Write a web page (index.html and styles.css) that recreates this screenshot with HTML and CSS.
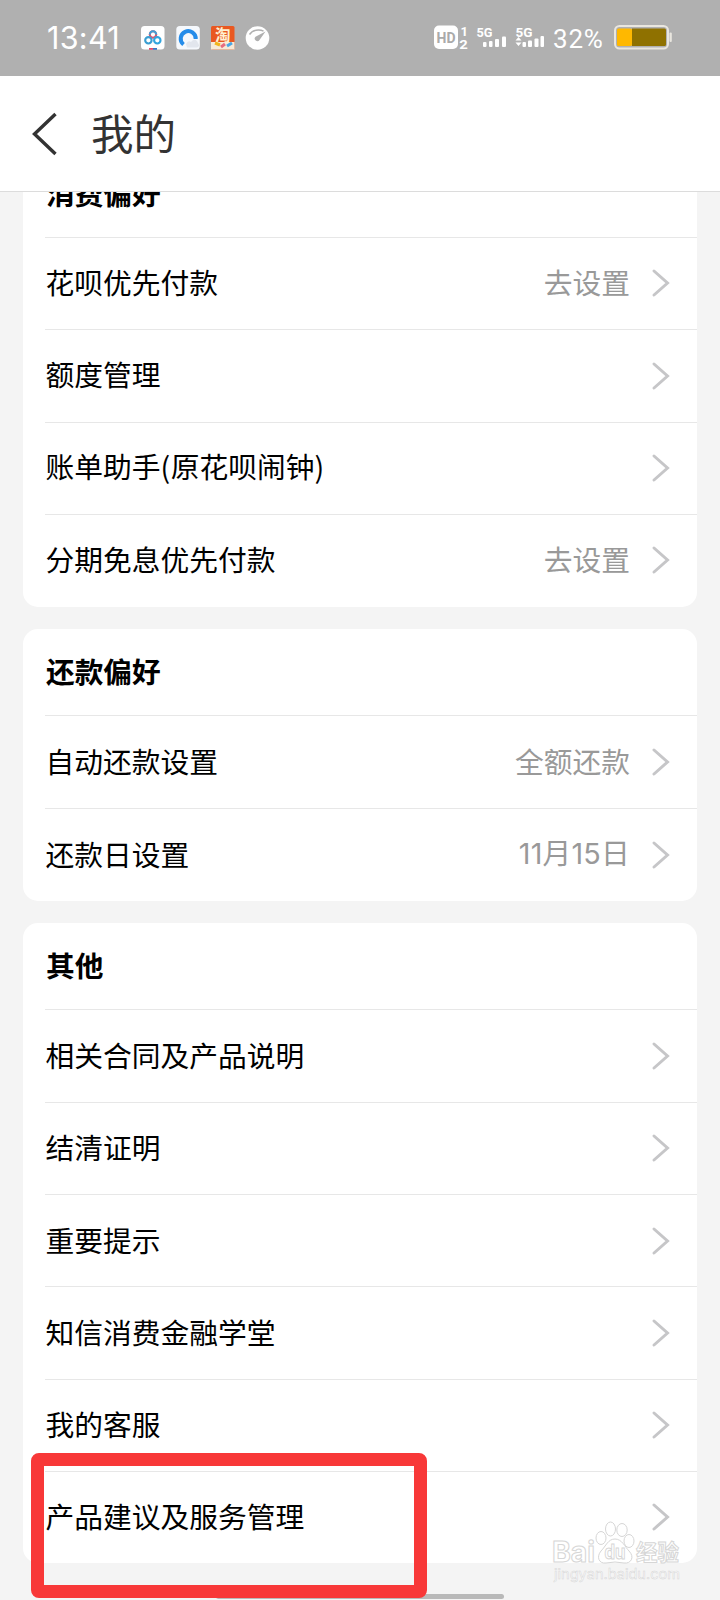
FILE: index.html
```html
<!DOCTYPE html>
<html lang="zh-CN">
<head>
<meta charset="utf-8">
<title>我的</title>
<link rel="stylesheet" href="styles.css">
</head>
<body>
<svg class="defs" width="0" height="0">
  <symbol id="chev" viewBox="0 0 20 30"><path d="M3 3 L16.500 15 L3 27" fill="none" stroke="#c6c6c8" stroke-width="3" stroke-linecap="round" stroke-linejoin="miter"/></symbol>
</svg>
<div class="screen">
  <div class="status">
    <span class="time">13:41</span>
    <svg class="apps" width="130" height="24" viewBox="0 0 130 24">
      <rect x="0" y="0" width="23.5" height="23.5" rx="3.5" fill="#fff"/>
      <g fill="none" stroke-width="2.1"><circle cx="12" cy="8.5" r="3.2" stroke="#d8566f"/><path d="M8.8 8.5a3.2 3.2 0 0 1 6.4 0" stroke="#3e9fd6"/><circle cx="7.4" cy="14.3" r="3.2" stroke="#3a9ed2"/><circle cx="16.3" cy="14.3" r="3.2" stroke="#31a5df"/></g>
      <rect x="8" y="22" width="4" height="1.8" fill="#e34b68"/><rect x="12" y="22" width="4" height="1.8" fill="#3977c4"/>
      <rect x="35.3" y="0" width="23.5" height="23.5" rx="3.5" fill="#f5f8fc"/>
      <path d="M42.500 18.500 A7.500 7.500 0 1 1 54.700 13" fill="none" stroke="#258ce9" stroke-width="4"/>
      <path d="M45 18q2-4 5-2q3-4 6-1l2 4v1q-1 1.500-3 1.500h-9z" fill="#e2e6ed"/>
      <rect x="70" y="0" width="23.5" height="23.5" rx="1.5" fill="#e95820"/>
      <path d="M70 16h23.5v7.5H70z" fill="#f6ead8"/>
      <text x="74" y="14.5" class="tao">淘</text>
      <path d="M74 17l5 2" stroke="#f0b51d" stroke-width="3"/><path d="M80 21l4-3" stroke="#e76d80" stroke-width="3"/><path d="M86 20l5-3" stroke="#4aa5e4" stroke-width="3"/>
      <circle cx="116.5" cy="12" r="11.8" fill="#fff"/>
      <path d="M108.500 8.500q3-4.500 9-4.500q3 0 5 1.200" fill="none" stroke="#b0b0b0" stroke-width="1.5"/>
      <path d="M124.500 5.500l-6 8.500a2.600 2.600 0 1 1-4-3.300z" fill="#b0b0b0"/>
    </svg>
    <svg class="signals" width="110" height="26" viewBox="0 0 110 26">
      <rect x="0" y="0.5" width="24" height="23.5" rx="5" fill="#fff"/>
      <text x="2.5" y="18" class="hd" textLength="19" lengthAdjust="spacingAndGlyphs">HD</text>
      <text x="26.5" y="10.500" class="sim">1</text><text x="25.2" y="24" class="sim" textLength="8.5" lengthAdjust="spacingAndGlyphs">2</text>
      <text x="42.5" y="11.5" class="net" textLength="16" lengthAdjust="spacingAndGlyphs">5G</text>
      <text x="81.5" y="11.5" class="net" textLength="17" lengthAdjust="spacingAndGlyphs">5G</text>
      <g fill="#fff">
        <rect x="49" y="17" width="3.5" height="5" rx="1"/><rect x="55" y="16" width="3.5" height="6" rx="1"/><rect x="61" y="14" width="4" height="8" rx="1"/><rect x="68" y="11.500" width="4" height="10.500" rx="1"/>
        <path d="M81.500 15.500l3-3.500l3 3.500zM81.500 17.500h6l-3 3.500z"/>
        <rect x="88.5" y="17" width="3.5" height="5" rx="1"/><rect x="94" y="15.500" width="4" height="6.500" rx="1"/><rect x="100.500" y="13.500" width="4" height="8.500" rx="1"/><rect x="106.500" y="11" width="3.500" height="11" rx="1"/>
      </g>
    </svg>
    <span class="pct">32%</span>
    <svg class="battery" width="58" height="25" viewBox="0 0 58 25">
      <rect x="1" y="1" width="53" height="22.5" rx="4.5" fill="none" stroke="#e9e6df" stroke-width="2"/>
      <rect x="3" y="3.5" width="15" height="17.5" rx="1.5" fill="#ffb800"/><path d="M18 3.500h32.500q1.500 0 1.500 1.500v14.500q0 1.500-1.500 1.500H18z" fill="#8f7100"/>
      <rect x="55.5" y="7.5" width="2.3" height="9.5" rx="1" fill="#e9e6df"/>
    </svg>
  </div>
  <div class="header">
    <svg class="back" width="26" height="44" viewBox="0 0 26 44"><path d="M24.500 2 L3.500 22 L24.500 42" fill="none" stroke="#333" stroke-width="3.4"/></svg>
    <h1 class="title">我的</h1>
  </div>
  <div class="content">
    <section class="card first">
      <h2 class="head">消费偏好</h2>
      <div class="row"><span>花呗优先付款</span><span class="value">去设置</span><svg class="chev"><use href="#chev"/></svg></div>
      <div class="row"><span>额度管理</span><svg class="chev"><use href="#chev"/></svg></div>
      <div class="row"><span>账单助手<span class="paren">(</span>原花呗闹钟<span class="paren">)</span></span><svg class="chev"><use href="#chev"/></svg></div>
      <div class="row"><span>分期免息优先付款</span><span class="value">去设置</span><svg class="chev"><use href="#chev"/></svg></div>
    </section>
    <section class="card">
      <h2 class="head">还款偏好</h2>
      <div class="row"><span>自动还款设置</span><span class="value">全额还款</span><svg class="chev"><use href="#chev"/></svg></div>
      <div class="row"><span>还款日设置</span><span class="value date">11月15日</span><svg class="chev"><use href="#chev"/></svg></div>
    </section>
    <section class="card last">
      <h2 class="head">其他</h2>
      <div class="row"><span>相关合同及产品说明</span><svg class="chev"><use href="#chev"/></svg></div>
      <div class="row"><span>结清证明</span><svg class="chev"><use href="#chev"/></svg></div>
      <div class="row"><span>重要提示</span><svg class="chev"><use href="#chev"/></svg></div>
      <div class="row"><span>知信消费金融学堂</span><svg class="chev"><use href="#chev"/></svg></div>
      <div class="row"><span>我的客服</span><svg class="chev"><use href="#chev"/></svg></div>
      <div class="row"><span>产品建议及服务管理</span><svg class="chev"><use href="#chev"/></svg></div>
    </section>
  </div>
  <div class="homebar"></div>
  <div class="highlight"></div>
  <svg class="watermark" width="140" height="70" viewBox="0 0 140 70">
    <g fill="#fff" stroke="#d6d6d6" stroke-width="1">
      <text x="5" y="42" class="wm-big" textLength="43" lengthAdjust="spacingAndGlyphs">Bai</text>
      <ellipse cx="54" cy="18" rx="5" ry="6.5"/><ellipse cx="63.500" cy="9" rx="5" ry="7"/><ellipse cx="75" cy="10" rx="5.2" ry="6.5"/><ellipse cx="82" cy="21" rx="5" ry="6.5"/>
      <path d="M68 19c7 0 10 8 14 12c6 6 2 13-5 12q-9-2-18 0c-7 1-10-6-5-12c5-5 7-12 14-12z"/>
      <text x="57.500" y="39" class="wm-du" textLength="21" lengthAdjust="spacingAndGlyphs">du</text>
      <text x="89" y="40" class="wm-cn" textLength="43" lengthAdjust="spacingAndGlyphs">经验</text>
    </g>
    <text x="7" y="59" class="wm-url" textLength="126" lengthAdjust="spacingAndGlyphs">jingyan.baidu.com</text>
  </svg>
</div>
</body>
</html>
```
FILE: styles.css
```css
* { box-sizing: border-box; }
body { margin: 0; }
.defs { position: absolute; }
.screen {
  position: relative;
  width: 720px;
  height: 1600px;
  overflow: hidden;
  display: flex;
  flex-direction: column;
  background: #f4f4f4;
  font-family: "Noto Sans CJK SC", sans-serif;
  color: #000;
}
.status {
  flex: none;
  height: 76px;
  background: #b0b0b0;
  display: flex;
  align-items: flex-start;
  padding: 25px 0 0 47px;
  color: #fff;
}
.time { width: 94px; font: 30.5px/26px Inter, sans-serif; letter-spacing: 0.3px; }
.apps { flex: none; margin-top: 1px; overflow: visible; }
.signals { flex: none; margin-left: 163px; overflow: visible; }
.pct { width: 61px; margin-left: 9px; font: 26px/29px Roboto, sans-serif; letter-spacing: 0.8px; white-space: nowrap; }
.battery { flex: none; }
.tao { font: 700 15.5px "Noto Sans CJK SC", sans-serif; fill: #fff0d0; }
.hd { font: 700 15px Roboto, sans-serif; fill: #aaa; }
.sim { font: 700 13px Roboto, sans-serif; fill: #fff; }
.net { font: 700 13px Roboto, sans-serif; fill: #fff; }
.header {
  flex: none;
  height: 116px;
  padding: 1px 0 0 31px;
  display: flex;
  align-items: center;
  background: #fff;
  border-bottom: 1.5px solid #dcdcdc;
  position: relative;
  z-index: 1;
}
.back { flex: none; }
.title { margin: -5px 0 0 34px; font-size: 42.5px; line-height: 60px; font-weight: 400; color: #333; }
.content { flex: none; padding: 0 23px; display: flex; flex-direction: column; gap: 22.6px; }
.card { background: #fff; border-radius: 15px; padding-left: 22px; }
.first { margin-top: -41px; }
.head { margin: 0; height: 86px; padding: 0 0 3px 1px; display: flex; align-items: center; font-size: 28.7px; font-weight: 700; }
.row {
  height: 92.3px;
  border-top: 1px solid #e7e7e7;
  padding: 0 26px 0 0.5px;
  display: flex;
  align-items: center;
  font-size: 28.75px;
  line-height: 42px;
}
.first .row { height: 92.4px; }
.first .row > span { padding-bottom: 4px; }
.first .chev { margin-bottom: 1px; }
.card:nth-child(2) .row { height: 92.8px; }
.row > span { padding-bottom: 2px; }
.paren { letter-spacing: 0.6px; }
.value { margin-left: auto; color: #999; }
.date { font-family: Inter, "Noto Sans CJK SC", sans-serif; font-size: 28.75px; letter-spacing: 0.2px; }
.chev { width: 20px; height: 30px; margin-left: auto; flex: none; }
.value + .chev { margin-left: 21px; }
.homebar { position: absolute; left: 216px; top: 1594px; width: 288px; height: 5px; border-radius: 3px; background: #b9b9b9; }
.highlight { position: absolute; left: 31px; top: 1453px; width: 396px; height: 145px; border: 13.5px solid #f83838; border-radius: 8px; }
.watermark { position: absolute; left: 547px; top: 1520px; overflow: visible; }
.wm-big { font: 700 28px Inter, sans-serif; }
.wm-du { font: 700 20px Inter, sans-serif; }
.wm-cn { font: 700 22px "Noto Sans CJK SC", sans-serif; }
.wm-url { font: 14px Inter, sans-serif; fill: #fff; stroke: #d6d6d6; stroke-width: 0.5px; }
```
